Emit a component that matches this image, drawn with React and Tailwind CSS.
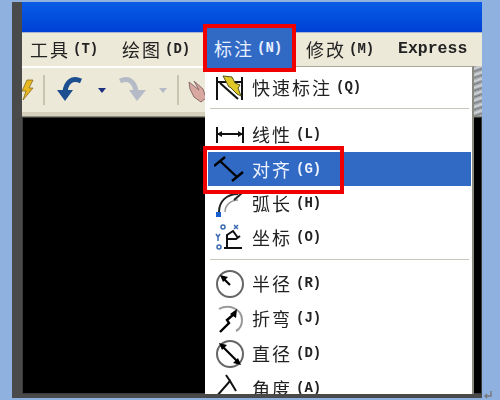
const cjk = { fontFamily: '"Noto Sans CJK SC", "Liberation Mono", monospace' };

function MenuTitle({ cn, hot }) {
  return (
    <div className="w-[92px] shrink-0 whitespace-nowrap flex items-center h-[20px] text-[#222]">
      <span className="text-[18px] tracking-[2px]">{cn}</span>
      <span className="ml-[3px] font-bold text-[14px] font-['Liberation_Mono']">{hot}</span>
    </div>
  );
}

function Item({ icon, cn, hot, active, short }) {
  return (
    <div className={`${short ? "h-[34px]" : "h-[35px]"} shrink-0 flex items-center ${active ? "bg-[#316ac5] text-[#eef3ff]" : "text-[#222]"}`}>
      <div className="w-[40px] pl-[4px] flex items-center justify-center shrink-0">{icon}</div>
      <span className="ml-[4px] text-[18px] tracking-[2px] whitespace-nowrap">{cn}</span>
      <span className="ml-[4px] text-[14px] font-bold font-['Liberation_Mono']">{hot}</span>
    </div>
  );
}

function Dim({ children }) {
  return (
    <svg width="32" height="32" viewBox="0 0 32 32" fill="none" stroke="#111" strokeWidth="2">
      {children}
    </svg>
  );
}

const icons = {
  quick: (
    <Dim>
      <path d="M3 5v23M28 5v23M3 10h25" />
      <path d="M9 4l9 1 3 6 5 2-2 3 3 8-4-2-7-7-1 0z" fill="#e0c828" stroke="#55551c" strokeWidth="1" />
      <path d="M6 11l18 16" />
    </Dim>
  ),
  linear: (
    <Dim>
      <path d="M3 8v16M29 8v16M3 15h26" />
      <path d="M3 15l5-3v6zM29 15l-5-3v6z" fill="#111" stroke="none" />
    </Dim>
  ),
  aligned: (
    <svg width="32" height="32" viewBox="0 0 32 32" fill="none" stroke="#000" strokeWidth="2.4">
      <path d="M0 13l11-9M18 28l11-9M6 8l17 16" />
    </svg>
  ),
  arc: (
    <svg width="32" height="32" viewBox="0 0 32 32" fill="none" stroke="#222" strokeWidth="2">
      <path d="M5 25C5 14 13 7 24 7" />
      <path d="M11 25C11 18 17 13 24 13" stroke="#999" strokeWidth="1.5" />
      <rect x="2" y="25" width="5" height="5" fill="#1a5fd0" stroke="none" />
      <path d="M20 13l8-7" />
    </svg>
  ),
  ordinate: (
    <svg width="32" height="32" viewBox="0 0 32 32" fill="none" stroke="#111" strokeWidth="2">
      <path d="M10 27h18M13 27V14l6-4 5 7M13 18h9l4-3" />
      <circle cx="9" cy="6" r="2" stroke="#3a6ab0" strokeWidth="1.5" />
      <circle cx="5" cy="26" r="2" stroke="#3a6ab0" strokeWidth="1.5" />
      <path d="M20 4l4 4M24 4l-4 4" stroke="#3a6ab0" strokeWidth="1.5" />
      <path d="M2 13l2 3 2-3M4 16v4" stroke="#3a6ab0" strokeWidth="1.5" />
    </svg>
  ),
  radius: (
    <svg width="32" height="32" viewBox="0 0 32 32" fill="none">
      <circle cx="16" cy="16" r="13" stroke="#666" strokeWidth="2" />
      <path d="M16 17L9 10" stroke="#000" strokeWidth="2.2" />
      <path d="M6 7l8 2-5 5z" fill="#000" />
    </svg>
  ),
  jog: (
    <svg width="32" height="32" viewBox="0 0 32 32" fill="none">
      <path d="M5 6C14 1 28 5 28 17c0 5-2 9-6 11" stroke="#999" strokeWidth="2" />
      <path d="M6 29l9-9-2-3 7-6" stroke="#000" strokeWidth="2.4" />
      <path d="M23 6l-1 9-6-4z" fill="#000" />
    </svg>
  ),
  diameter: (
    <svg width="32" height="32" viewBox="0 0 32 32" fill="none">
      <circle cx="16" cy="16" r="13" stroke="#666" strokeWidth="2" />
      <path d="M8 8l16 16" stroke="#000" strokeWidth="2.2" />
      <path d="M5 5l8 2-5 5zM27 27l-8-2 5-5z" fill="#000" />
    </svg>
  ),
  angle: (
    <svg width="32" height="32" viewBox="0 0 32 32" fill="none" stroke="#111" strokeWidth="2">
      <path d="M2 24L16 8l6 10" />
      <path d="M12 2l4 6" />
    </svg>
  ),
};

export default function App() {
  return (
    <div className="relative w-[500px] h-[400px] bg-[#8fb1df] pt-[2px] pl-[12px] pr-[18px] pb-[2px] overflow-hidden" style={cjk}>
      <div className="relative h-full flex flex-col border-l-[10px] border-b-[4px] border-[#4a4a4a] overflow-hidden">
        <div className="h-[30px] shrink-0 bg-gradient-to-b from-[#0a5ce6] to-[#0040d4]" />
        <div className="h-[34px] shrink-0 bg-[#ece9d8] border-t border-[#a9b5d0] pl-[8px] flex items-center [filter:blur(0.4px)]">
          <MenuTitle cn="工具" hot="(T)" />
          <MenuTitle cn="绘图" hot="(D)" />
          <div className="w-[92px] shrink-0" />
          <MenuTitle cn="修改" hot="(M)" />
          <span className="font-['Liberation_Mono'] font-bold text-[16.5px] text-[#222]">Express</span>
        </div>
        <div className="h-[46px] shrink-0 bg-[#ece9d8] border-t-2 border-white flex items-center">
          <svg width="12" height="24" viewBox="0 0 12 24" className="shrink-0">
            <path d="M5 2h6L7 10h4L1 22l3-9H0z" fill="#e8b820" stroke="#8a6a20" strokeWidth="0.8" />
          </svg>
          <div className="ml-[9px] w-[2px] h-[30px] bg-[#c8c5b2]" />
          <svg width="28" height="32" viewBox="0 0 28 32" className="ml-[12px] shrink-0" fill="none">
            <path d="M24 7C15 3 9 8 8 18" stroke="#1c4f8f" strokeWidth="5" />
            <path d="M0 16h16l-8 11z" fill="#1c4f8f" />
          </svg>
          <div className="ml-[13px] border-x-[4px] border-x-transparent border-t-[5px] border-t-[#1c2f80]" />
          <svg width="28" height="32" viewBox="0 0 28 32" className="ml-[12px] shrink-0" fill="none">
            <path d="M2 7c9-4 15 1 16 11" stroke="#b4bac6" strokeWidth="5" />
            <path d="M28 16H11l8 11z" fill="#b4bac6" />
          </svg>
          <div className="ml-[13px] border-x-[4px] border-x-transparent border-t-[5px] border-t-[#b4bac6]" />
          <div className="ml-[10px] w-[2px] h-[30px] bg-[#c8c5b2]" />
          <svg width="20" height="26" viewBox="0 0 20 26" className="ml-[9px] shrink-0" fill="none">
            <path d="M1 5l10 8-5-9 9 8 3 9-5 4-7-5-4-8z" fill="#d8a8a0" stroke="#8a6a6a" strokeWidth="1" />
          </svg>
        </div>
        <div className="h-[5px] shrink-0 bg-[#d4d0bc] border-b border-[#8c8a7c]" />
        <div className="flex-1 bg-black border border-[#3a3a3a]" />

        {/* noisy drawing edge seen past the menu */}
        <div className="absolute left-[451px] top-[64px] w-[9px] h-[50px] bg-[repeating-linear-gradient(160deg,#8f959b_0px,#d5d8da_3px,#6f747a_6px)]" />

        {/* dropdown sits over the canvas */}
        <div className="absolute left-[183px] top-[64px] w-[269px] h-[340px] flex flex-col bg-white border-t border-t-[#a8a694] border-r-2 border-r-[#8a8a80] pt-[3px] pl-[3px] pr-[1px] [filter:blur(0.4px)]">
          <Item icon={icons.quick} cn="快速标注" hot="(Q)" />
          <div className="h-[2px] mt-[3px] mb-[8px] mx-[2px] bg-[#c9c7bb]" />
          <Item icon={icons.linear} cn="线性" hot="(L)" />
          <Item icon={icons.aligned} cn="对齐" hot="(G)" active short />
          <Item icon={icons.arc} cn="弧长" hot="(H)" short />
          <Item icon={icons.ordinate} cn="坐标" hot="(O)" short />
          <div className="h-[2px] mt-[5px] mb-[6px] mx-[2px] bg-[#c9c7bb]" />
          <Item icon={icons.radius} cn="半径" hot="(R)" />
          <Item icon={icons.jog} cn="折弯" hot="(J)" />
          <Item icon={icons.diameter} cn="直径" hot="(D)" />
          <Item icon={icons.angle} cn="角度" hot="(A)" />
        </div>

        {/* red callouts */}
        <div className="absolute left-[181px] top-[22px] w-[93px] h-[48px] border-[4px] border-[#f00000] bg-[#316ac5] pl-[7px] flex items-center text-[#e8f0ff] whitespace-nowrap">
          <span className="text-[18px] tracking-[2px]">标注</span>
          <span className="ml-[3px] font-bold text-[14px] font-['Liberation_Mono']">(N)</span>
        </div>
        <div className="absolute left-[181px] top-[144px] w-[141px] h-[48px] border-[4px] border-[#f00000]" />
      </div>
      <svg width="8" height="8" viewBox="0 0 8 8" fill="none" stroke="#777" strokeWidth="1.4" className="absolute left-[484px] top-[391px]">
        <path d="M7 0v5H1M3 3L1 5l2 2" />
      </svg>
    </div>
  );
}
